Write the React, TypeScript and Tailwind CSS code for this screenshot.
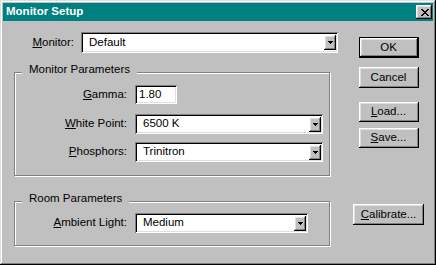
import type { ReactNode } from "react"

const raised =
  "bg-[#c0c0c0] shadow-[inset_-1px_-1px_#000,inset_1px_1px_#fff,inset_-2px_-2px_#808080,inset_2px_2px_#dfdfdf]"
const sunken =
  "bg-white shadow-[inset_1px_1px_#808080,inset_-1px_-1px_#fff,inset_2px_2px_#000,inset_-2px_-2px_#dfdfdf]"

function CloseGlyph() {
  return (
    <svg width="8" height="7" viewBox="0 0 8 7" shapeRendering="crispEdges">
      <path
        fill="#000"
        d="M0 0h2v1H0zM6 0h2v1H6zM1 1h2v1H1zM5 1h2v1H5zM2 2h4v1H2zM3 3h2v1H3zM2 4h4v1H2zM1 5h2v1H1zM5 5h2v1H5zM0 6h2v1H0zM6 6h2v1H6z"
      />
    </svg>
  )
}

function Arrow() {
  return (
    <svg width="5" height="3" viewBox="0 0 5 3" shapeRendering="crispEdges">
      <path fill="#000" d="M0 0h5v1H0zM1 1h3v1H1zM2 2h1v1H2z" />
    </svg>
  )
}

function Combo({ value, className }: { value: string; className: string }) {
  return (
    <div className={`flex items-center ${sunken} ${className}`}>
      <span className="flex-1 pl-[8px]">{value}</span>
      <div className={`mr-[2px] flex h-[15px] w-[12px] items-center justify-center ${raised}`}>
        <Arrow />
      </div>
    </div>
  )
}

function Button({ children, isDefault, className }: { children: ReactNode; isDefault?: boolean; className: string }) {
  if (isDefault) {
    return (
      <div className={`border border-black ${className}`}>
        <div className={`flex h-full w-full items-center justify-center ${raised}`}>{children}</div>
      </div>
    )
  }
  return <div className={`flex items-center justify-center ${raised} ${className}`}>{children}</div>
}

function Key({ children }: { children: ReactNode }) {
  return <u className="underline decoration-1 underline-offset-[1px]">{children}</u>
}

function Group({ title, className, children }: { title: string; className: string; children: ReactNode }) {
  return (
    <div className={`relative border border-[#808080] shadow-[1px_1px_0_#fff,inset_1px_1px_0_#fff] ${className}`}>
      <span className="absolute left-[7px] top-[-10px] bg-[#c0c0c0] px-[7px] leading-[13px]">{title}</span>
      {children}
    </div>
  )
}

function Row({ label, children, className }: { label: ReactNode; children: ReactNode; className: string }) {
  return (
    <div className={`flex items-center ${className}`}>
      <div className="w-[112px] text-right">{label}</div>
      <div className="ml-[8px]">{children}</div>
    </div>
  )
}

export default function App() {
  return (
    <div className="h-[265px] w-[436px] bg-[#c0c0c0] p-[3px] font-['Liberation_Sans',Arial,sans-serif] text-[11.5px] text-black shadow-[inset_-1px_-1px_#000,inset_1px_1px_#dfdfdf,inset_-2px_-2px_#808080,inset_2px_2px_#fff]">
      <div className="flex h-[18px] items-center justify-between bg-[#008080] pl-[3px] pr-[1px]">
        <span className="font-bold text-white">Monitor Setup</span>
        <div className={`flex h-[14px] w-[16px] items-center justify-center pl-[1px] pt-[1px] ${raised}`}>
          <CloseGlyph />
        </div>
      </div>

      <div className="flex">
        <div className="ml-[11px] w-[324px]">
          <div className="mt-[11px] flex items-center">
            <div className="w-[60px] text-right">
              <Key>M</Key>onitor:
            </div>
            <Combo value="Default" className="ml-[7px] h-[21px] w-[257px]" />
          </div>

          <Group title="Monitor Parameters" className="mt-[19px] h-[104px] w-[316px]">
            <Row label={<><Key>G</Key>amma:</>} className="mt-[12px]">
              <div className={`flex h-[19px] w-[42px] items-center pl-[4px] ${sunken}`}>1.80</div>
            </Row>
            <Row label={<><Key>W</Key>hite Point:</>} className="mt-[10px]">
              <Combo value="6500 K" className="h-[20px] w-[188px]" />
            </Row>
            <Row label={<><Key>P</Key>hosphors:</>} className="mt-[8px]">
              <Combo value="Trinitron" className="h-[20px] w-[188px]" />
            </Row>
          </Group>

          <Group title="Room Parameters" className="mt-[25px] h-[45px] w-[316px]">
            <Row label={<><Key>A</Key>mbient Light:</>} className="mt-[11px]">
              <Combo value="Medium" className="h-[20px] w-[173px]" />
            </Row>
          </Group>
        </div>

        <div className="ml-[15px] flex w-[71px] flex-col items-center">
          <Button isDefault className="mt-[16px] h-[21px] w-[60px]">OK</Button>
          <Button className="mt-[9px] h-[21px] w-[60px]">Cancel</Button>
          <Button className="mt-[14px] h-[20px] w-[60px]">
            <span><Key>L</Key>oad...</span>
          </Button>
          <Button className="mt-[6px] h-[20px] w-[60px]">
            <span><Key>S</Key>ave...</span>
          </Button>
          <Button className="mt-[56px] h-[21px] w-[71px]">
            <span><Key>C</Key>alibrate...</span>
          </Button>
        </div>
      </div>
    </div>
  )
}
